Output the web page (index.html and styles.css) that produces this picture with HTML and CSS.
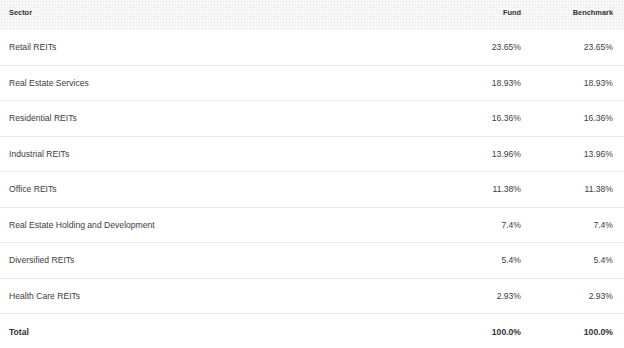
FILE: index.html
```html
<!DOCTYPE html>
<html>
<head>
<meta charset="utf-8">
<link rel="stylesheet" href="styles.css">
</head>
<body>
<table class="alloc">
  <thead>
    <tr class="head">
      <th class="name">Sector</th>
      <th class="num">Fund</th>
      <th class="num">Benchmark</th>
    </tr>
  </thead>
  <tbody>
    <tr><td class="name">Retail REITs</td><td class="num">23.65%</td><td class="num">23.65%</td></tr>
    <tr><td class="name">Real Estate Services</td><td class="num">18.93%</td><td class="num">18.93%</td></tr>
    <tr><td class="name">Residential REITs</td><td class="num">16.36%</td><td class="num">16.36%</td></tr>
    <tr><td class="name">Industrial REITs</td><td class="num">13.96%</td><td class="num">13.96%</td></tr>
    <tr><td class="name">Office REITs</td><td class="num">11.38%</td><td class="num">11.38%</td></tr>
    <tr><td class="name">Real Estate Holding and Development</td><td class="num">7.4%</td><td class="num">7.4%</td></tr>
    <tr><td class="name">Diversified REITs</td><td class="num">5.4%</td><td class="num">5.4%</td></tr>
    <tr><td class="name">Health Care REITs</td><td class="num">2.93%</td><td class="num">2.93%</td></tr>
    <tr class="total"><td class="name">Total</td><td class="num">100.0%</td><td class="num">100.0%</td></tr>
  </tbody>
</table>
</body>
</html>
```
FILE: styles.css
```css
html, body {
  margin: 0;
  padding: 0;
  background: #ffffff;
}
body {
  font-family: "Liberation Sans", Arial, sans-serif;
  color: #3a3a3a;
}
.alloc {
  width: 624px;
  border-collapse: collapse;
  table-layout: fixed;
}
.alloc th, .alloc td {
  padding: 0 11px 0 9px;
  white-space: nowrap;
}
.alloc .num {
  width: 72px;
  text-align: right;
}
.head {
  height: 29.5px;
  background-color: #f8f8f8;
  background-image: radial-gradient(circle, #e2e2e2 0.7px, transparent 0.8px);
  background-size: 3px 3px;
}
.head th {
  font-size: 7.4px;
  font-weight: bold;
  color: #333333;
  vertical-align: top;
  padding-top: 8px;
  text-align: left;
}
.head th.num {
  text-align: right;
}
tbody tr {
  height: 35.5px;
}
tbody td {
  font-size: 8.6px;
  color: #3d3d3d;
  vertical-align: middle;
  border-bottom: 1px solid #e8e8e8;
}
tbody tr.total td {
  border-bottom: none;
  font-weight: bold;
  color: #333333;
}
```
